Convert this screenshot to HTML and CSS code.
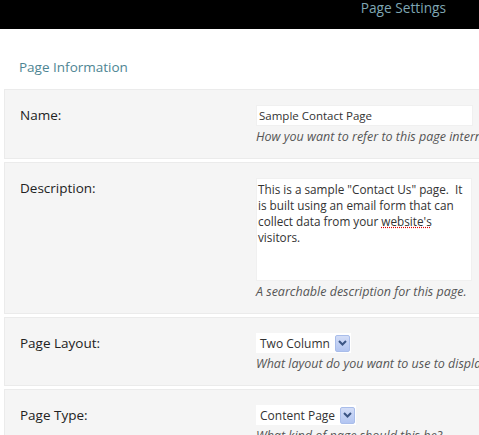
FILE: index.html
```html
<!DOCTYPE html>
<html>
<head>
    <link rel="stylesheet" href="styles.css">
</head>
<body>
    <div class="topbar">
        <span class="topbar-title">Page Settings</span>
    </div>

    <h2 class="section-title">Page Information</h2>

    <div class="form">
        <div class="row">
            <label class="label">Name:</label>
            <div class="field">
                <div class="textinput">Sample Contact Page</div>
                <div class="hint">How you want to refer to this page internally.</div>
            </div>
        </div>

        <div class="row">
            <label class="label">Description:</label>
            <div class="field">
                <div class="textarea">This is a sample "Contact Us" page.&nbsp; It<br>is built using an email form that can<br>collect data from your <span class="misspelled">website's</span><br>visitors.</div>
                <div class="hint">A searchable description for this page.</div>
            </div>
        </div>

        <div class="row">
            <label class="label">Page Layout:</label>
            <div class="field">
                <div class="select">
                    <span class="select-text">Two Column</span>
                    <span class="select-arrow">
                        <svg width="9" height="6" viewBox="0 0 9 6"><path d="M1 1 L4.5 4.5 L8 1" fill="none" stroke="#3b5584" stroke-width="2"/></svg>
                    </span>
                </div>
                <div class="hint">What layout do you want to use to display this page?</div>
            </div>
        </div>

        <div class="row">
            <label class="label">Page Type:</label>
            <div class="field">
                <div class="select">
                    <span class="select-text">Content Page</span>
                    <span class="select-arrow">
                        <svg width="9" height="6" viewBox="0 0 9 6"><path d="M1 1 L4.5 4.5 L8 1" fill="none" stroke="#3b5584" stroke-width="2"/></svg>
                    </span>
                </div>
                <div class="hint">What kind of page should this be?</div>
            </div>
        </div>
    </div>
</body>
</html>
```

FILE: styles.css
```css
body {
    margin: 0;
    background-color: #fff;
    font-family: "Open Sans", Arial, sans-serif;
    overflow: hidden;
}

.topbar {
    background-color: #000;
    height: 29px;
    display: flex;
    justify-content: flex-end;
    padding-right: 33px;
}

.topbar-title {
    color: #7fa6b3;
    font-size: 13.7px;
    line-height: 15px;
}

.section-title {
    margin: 0;
    padding: 29px 0 13px 19px;
    font-size: 13.5px;
    line-height: 18px;
    font-weight: normal;
    color: #4e8593;
}

.form {
    margin-left: 4px;
    width: 640px;
}

.row {
    display: grid;
    grid-template-columns: 236px 1fr;
    align-items: start;
    background-color: #f5f5f5;
    border: 1px solid #ebebeb;
    padding: 15px 0 12px 15px;
    margin-bottom: 3px;
}

.label {
    font-size: 13.5px;
    line-height: 20px;
    color: #222;
}

.field {
    display: flex;
    flex-direction: column;
    align-items: flex-start;
}

.textinput {
    width: 213px;
    height: 19px;
    background-color: #fff;
    border: 1px solid #f0f0f0;
    font-size: 11.5px;
    line-height: 19px;
    padding-left: 2px;
    color: #333;
}

.textarea {
    width: 213px;
    height: 99px;
    background-color: #fff;
    border: 1px solid #f0f0f0;
    font-size: 11.75px;
    line-height: 16px;
    padding: 2px 0 0 1px;
    color: #333;
    white-space: nowrap;
}

.misspelled {
    text-decoration: underline dotted #d00;
}

.hint {
    font-size: 12.5px;
    line-height: 18px;
    font-style: italic;
    color: #555;
    white-space: nowrap;
    margin-top: 2px;
}

.select {
    display: flex;
    align-items: center;
    height: 20px;
    background-color: #fff;
    padding: 0 1px 0 4px;
}

.select-text {
    font-size: 12px;
    color: #333;
    margin-right: 5px;
}

.select-arrow {
    display: flex;
    align-items: center;
    justify-content: center;
    width: 15px;
    height: 17px;
    box-sizing: border-box;
    border: 1px solid #a9bdea;
    background: linear-gradient(#d3ddf7, #b2c5f1);
    border-radius: 2px;
}
```
